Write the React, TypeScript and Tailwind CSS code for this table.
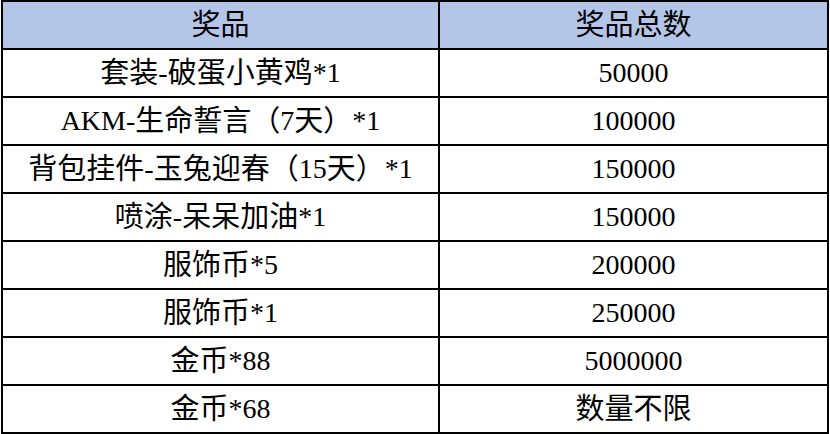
import * as React from "react"

const rows: [string, string][] = [
  ["套装-破蛋小黄鸡*1", "50000"],
  ["AKM-生命誓言（7天）*1", "100000"],
  ["背包挂件-玉兔迎春（15天）*1", "150000"],
  ["喷涂-呆呆加油*1", "150000"],
  ["服饰币*5", "200000"],
  ["服饰币*1", "250000"],
  ["金币*88", "5000000"],
  ["金币*68", "数量不限"],
]

// CJK runs are set a touch larger than the Latin text, as in the sheet
function Cell({ text }: { text: string }) {
  const parts = text.split(/([\u3000-\u9fff\uff00-\uffef]+)/).filter(Boolean)
  return (
    <>
      {parts.map((p, i) =>
        /[\u3000-\u9fff\uff00-\uffef]/.test(p) ? (
          <span key={i} className="text-[29px]">{p}</span>
        ) : (
          <span key={i}>{p}</span>
        )
      )}
    </>
  )
}

export default function App() {
  return (
    <div className="w-[830px] h-[434px] bg-white pl-px">
      <div
        className="grid grid-cols-[435px_387px] auto-rows-[46px] gap-[2px] p-[2px] bg-black w-[828px] text-[28px] text-black leading-none"
        style={{ fontFamily: '"Liberation Serif", "Noto Sans CJK SC", serif' }}
      >
        <div className="bg-[#b4c6e7] flex items-center justify-center"><Cell text="奖品" /></div>
        <div className="bg-[#b4c6e7] flex items-center justify-center"><Cell text="奖品总数" /></div>
        {rows.map(([name, count]) => (
          <React.Fragment key={name}>
            <div className="bg-white flex items-center justify-center whitespace-nowrap"><Cell text={name} /></div>
            <div className="bg-white flex items-center justify-center"><Cell text={count} /></div>
          </React.Fragment>
        ))}
      </div>
    </div>
  )
}
